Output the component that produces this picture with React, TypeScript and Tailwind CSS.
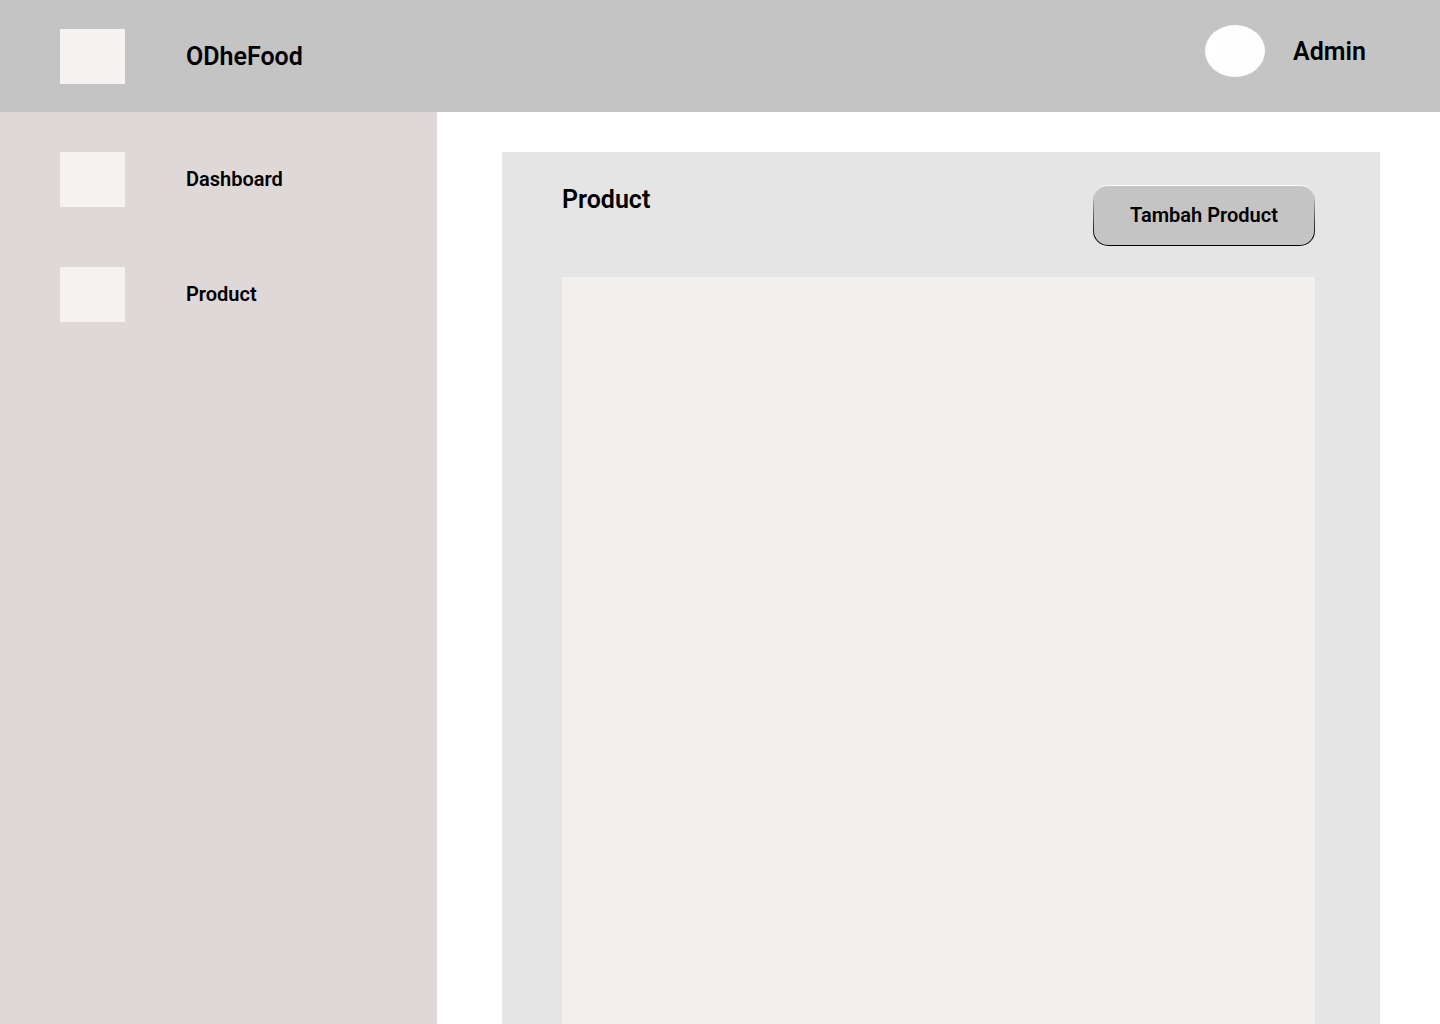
const navItems = [
  { label: "Dashboard", href: "#dashboard" },
  { label: "Product", href: "#product" },
];

function Header() {
  return (
    <header className="flex h-28 shrink-0 items-start justify-between bg-[#c4c4c4] pl-[60px] pr-[74px]">
      <a href="#home" className="mt-[29px] flex items-center gap-[61px] text-[25px] leading-[29px] font-semibold">
        <span className="h-[55px] w-[65px] bg-[#f6f2f2]" />
        ODheFood
      </a>
      <button type="button" className="mt-[25px] flex items-center gap-7 text-[25px] leading-[29px] font-semibold">
        <span className="h-[52px] w-[60px] rounded-[50%] bg-[#fffdfd]" />
        Admin
      </button>
    </header>
  );
}

function Sidebar() {
  return (
    <nav className="flex w-[437px] shrink-0 flex-col gap-[60px] bg-[#ded8d8] pt-10 pl-[60px]">
      {navItems.map((item) => (
        <a key={item.label} href={item.href} className="flex items-center gap-[61px] text-xl leading-[23px] font-semibold">
          <span className="h-[55px] w-[65px] bg-[#f6f2f2]" />
          {item.label}
        </a>
      ))}
    </nav>
  );
}

export default function App() {
  return (
    <div className="flex min-h-screen flex-col bg-white font-['Roboto',sans-serif] text-black">
      <Header />
      <div className="flex grow">
        <Sidebar />
        <main className="flex grow pt-10 pr-[60px] pl-[65px]">
          <section className="flex grow flex-col bg-[#e5e5e5] pr-[65px] pl-[60px]">
            <div className="flex items-start justify-between pt-[33px]">
              <h1 className="text-[25px] leading-[29px] font-semibold">Product</h1>
              <button
                type="button"
                className="h-[61px] w-[222px] rounded-[15px] bg-linear-to-b from-white to-black p-px"
              >
                <span className="flex h-full items-center justify-center rounded-[14px] bg-[#c4c4c4] text-xl leading-[23px] font-semibold">
                  Tambah Product
                </span>
              </button>
            </div>
            <div className="mt-[31px] grow bg-[#f3efee]" />
          </section>
        </main>
      </div>
    </div>
  );
}
